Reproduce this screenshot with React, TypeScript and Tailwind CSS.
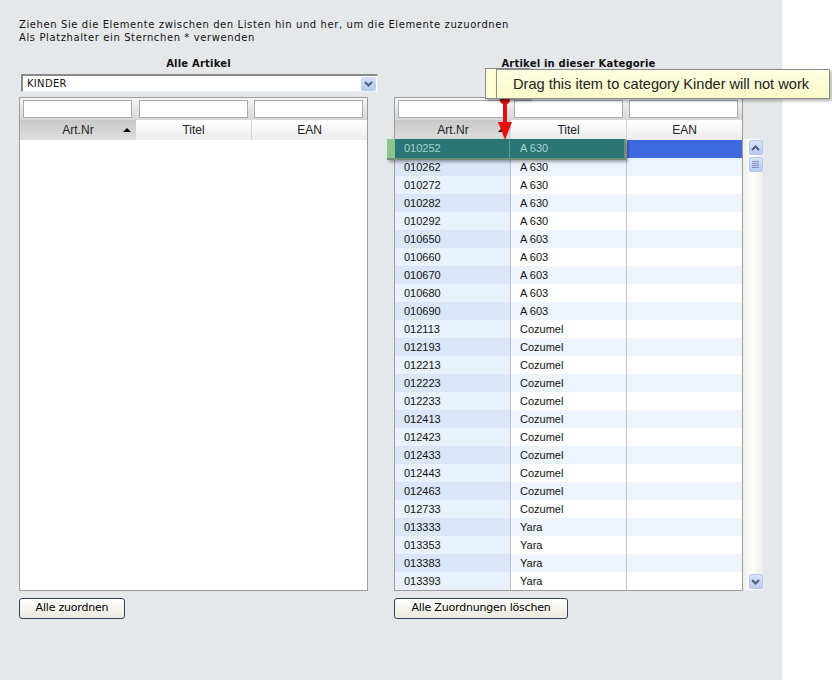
import React from "react";

interface Article {
    nr: string;
    title: string;
}

const articles: Article[] = [
    { nr: "010252", title: "A 630" },
    { nr: "010262", title: "A 630" },
    { nr: "010272", title: "A 630" },
    { nr: "010282", title: "A 630" },
    { nr: "010292", title: "A 630" },
    { nr: "010650", title: "A 603" },
    { nr: "010660", title: "A 603" },
    { nr: "010670", title: "A 603" },
    { nr: "010680", title: "A 603" },
    { nr: "010690", title: "A 603" },
    { nr: "012113", title: "Cozumel" },
    { nr: "012193", title: "Cozumel" },
    { nr: "012213", title: "Cozumel" },
    { nr: "012223", title: "Cozumel" },
    { nr: "012233", title: "Cozumel" },
    { nr: "012413", title: "Cozumel" },
    { nr: "012423", title: "Cozumel" },
    { nr: "012433", title: "Cozumel" },
    { nr: "012443", title: "Cozumel" },
    { nr: "012463", title: "Cozumel" },
    { nr: "012733", title: "Cozumel" },
    { nr: "013333", title: "Yara" },
    { nr: "013353", title: "Yara" },
    { nr: "013383", title: "Yara" },
    { nr: "013393", title: "Yara" },
];

function Chevron({ up = false }: { up?: boolean }) {
    return (
        <svg width="9" height="6" viewBox="0 0 9 6">
            <path
                d={up ? "M1 5 L4.5 1.5 L8 5" : "M1 1 L4.5 4.5 L8 1"}
                fill="none"
                stroke="#4a5f86"
                strokeWidth="2"
            />
        </svg>
    );
}

function FilterRow() {
    return (
        <div className="flex h-[22px] bg-gradient-to-b from-[#f6f6f6] to-[#d6d6d6]">
            {[0, 1, 2].map((i) => (
                <div key={i} className="w-[116px] pl-[3px] pt-[2px]">
                    <div className="w-[109px] h-[18px] bg-white border border-[#a4abb2]" />
                </div>
            ))}
        </div>
    );
}

function HeaderRow() {
    return (
        <div className="flex h-[20px] text-[12px] leading-[21px] text-[#222] font-['Liberation_Sans',Arial,sans-serif]">
            <div className="relative w-[116px] text-center bg-gradient-to-b from-[#c9c9c9] to-[#dedede]">
                Art.Nr
                <div className="absolute left-[103px] top-[8px] w-0 h-0 border-l-[4px] border-r-[4px] border-b-[4px] border-l-transparent border-r-transparent border-b-black" />
            </div>
            <div className="w-[116px] text-center bg-gradient-to-b from-white to-[#ececec] border-r border-[#d4d4d4]">
                Titel
            </div>
            <div className="flex-1 text-center bg-gradient-to-b from-white to-[#ececec]">EAN</div>
        </div>
    );
}

function Button({ label, width }: { label: string; width: string }) {
    return (
        <div
            className={`${width} h-[21px] mt-[7px] flex items-center justify-center rounded-[3px] border border-[#30455f] bg-gradient-to-b from-[#fefefd] to-[#ece9df] text-[11px] text-black font-['DejaVu_Sans',Verdana,sans-serif] tracking-[-0.2px]`}
        >
            {label}
        </div>
    );
}

export default function App() {
    return (
        <div className="flex w-[832px] h-[680px] bg-white">
            <div className="relative w-[782px] h-full bg-[#e5e8eb] font-['DejaVu_Sans',Verdana,sans-serif] text-[10px] text-[#111]">
                <div className="pl-[19px] pt-[19px] leading-[12.5px] tracking-[0.6px]">
                    <div>Ziehen Sie die Elemente zwischen den Listen hin und her, um die Elemente zuzuordnen</div>
                    <div>Als Platzhalter ein Sternchen * verwenden</div>
                </div>

                <div className="flex pl-[19px] mt-[14px]">
                    {/* linke Liste */}
                    <div className="w-[359px] flex flex-col">
                        <div className="h-[12px] leading-[12px] text-center font-bold tracking-[0.2px]">
                            Alle Artikel
                        </div>
                        <div className="ml-[2px] mt-[4px] h-[18px] flex items-center bg-white border-t-2 border-l-2 border-[#8a8a8a] border-b border-r border-b-[#eef0f2] border-r-[#eef0f2]">
                            <span className="pl-[4px] flex-1 tracking-[0.3px]">KINDER</span>
                            <div className="w-[15px] h-[14px] mr-[1px] flex items-center justify-center rounded-[2px] bg-gradient-to-b from-[#d3def8] to-[#b7c9f2]">
                                <Chevron />
                            </div>
                        </div>
                        <div className="mt-[5px] w-[349px] h-[494px] bg-white border border-[#9c9c9c] flex flex-col">
                            <FilterRow />
                            <HeaderRow />
                        </div>
                        <Button label="Alle zuordnen" width="w-[106px]" />
                    </div>

                    <div className="w-[16px]" />

                    {/* rechte Liste */}
                    <div className="w-[369px] flex flex-col">
                        <div className="h-[12px] leading-[12px] text-center font-bold tracking-[0.2px]">
                            Artikel in dieser Kategorie
                        </div>
                        <div className="mt-[4px] h-[18px]" />
                        <div className="mt-[5px] flex">
                            <div className="w-[349px] h-[494px] bg-white border border-[#9c9c9c] flex flex-col overflow-hidden">
                                <FilterRow />
                                <HeaderRow />
                                <div className="font-['Liberation_Sans',Arial,sans-serif] text-[11px] text-[#111]">
                                    {articles.map((a, i) => {
                                        const alt = i % 2 === 1;
                                        return (
                                            <div key={a.nr} className="flex h-[18px] leading-[18px]">
                                                <div
                                                    className={`w-[116px] pl-[9px] border-r border-[#c3c3c3] ${
                                                        alt ? "bg-[#dae6f8]" : "bg-[#e9f1fc]"
                                                    }`}
                                                >
                                                    {a.nr}
                                                </div>
                                                <div
                                                    className={`w-[116px] pl-[9px] border-r border-[#c3c3c3] ${
                                                        alt ? "bg-[#eef4fe]" : "bg-white"
                                                    }`}
                                                >
                                                    {a.title}
                                                </div>
                                                <div
                                                    className={`flex-1 ${
                                                        i === 0
                                                            ? "bg-[#3f6adf]"
                                                            : alt
                                                            ? "bg-[#eef4fe]"
                                                            : "bg-white"
                                                    }`}
                                                />
                                            </div>
                                        );
                                    })}
                                </div>
                            </div>
                            {/* Scrollleiste */}
                            <div className="mt-[42px] w-[20px] h-[451px] bg-gradient-to-r from-[#f1f0ea] via-[#fdfdfa] to-[#eeede6] flex flex-col items-center pt-[1px]">
                                <div className="ml-[5px] w-[14px] h-[15px] flex items-center justify-center rounded-[2px] border border-[#b8c8ee] bg-gradient-to-b from-[#d8e2fa] to-[#b9caf2]">
                                    <Chevron up />
                                </div>
                                <div className="ml-[5px] mt-[2px] w-[14px] h-[15px] flex flex-col items-center justify-center gap-[1px] rounded-[2px] border border-[#b8c8ee] bg-gradient-to-b from-[#d8e2fa] to-[#b9caf2]">
                                    <div className="w-[7px] h-px bg-[#7c90c4]" />
                                    <div className="w-[7px] h-px bg-[#7c90c4]" />
                                    <div className="w-[7px] h-px bg-[#7c90c4]" />
                                    <div className="w-[7px] h-px bg-[#7c90c4]" />
                                </div>
                                <div className="flex-1" />
                                <div className="ml-[5px] mb-[1px] w-[14px] h-[15px] flex items-center justify-center rounded-[2px] border border-[#b8c8ee] bg-gradient-to-b from-[#d8e2fa] to-[#b9caf2]">
                                    <Chevron />
                                </div>
                            </div>
                        </div>
                        <Button label="Alle Zuordnungen löschen" width="w-[174px]" />
                    </div>
                </div>

                {/* gezogenes Element */}
                <div className="absolute left-[387px] top-[139px] w-[239px] h-[21px] flex bg-[#2a7677] border-r-2 border-b-2 border-[#6f8f79] shadow-[2px_2px_3px_rgba(0,0,0,0.35)] font-['Liberation_Sans',Arial,sans-serif] text-[11px] leading-[19px] text-[#a7d3cc]">
                    <div className="w-[8px] bg-[#8cc48e]" />
                    <div className="w-[115px] pl-[9px] border-r border-[#5f9a98]">010252</div>
                    <div className="flex-1 pl-[10px]">A 630</div>
                </div>

                {/* roter Pfeil */}
                <div className="absolute left-[503px] top-[97px] w-[4px] h-[28px] bg-[#e01010]" />
                <div className="absolute left-[500px] top-[96px] w-[10px] h-[8px] rounded-full bg-[#d81010]" />
                <div className="absolute left-[498px] top-[122px] w-0 h-0 border-l-[7px] border-r-[7px] border-t-[18px] border-l-transparent border-r-transparent border-t-[#e81010]" />

                {/* Tooltip */}
                <div className="absolute left-[485px] top-[68px] w-[45px] h-[31px] bg-[#fdfdd6] border border-[#8c8c8c] shadow-[2px_2px_2px_rgba(0,0,0,0.3)]" />
                <div className="absolute left-[496px] top-[69px] w-[334px] h-[30px] pl-[16px] bg-gradient-to-b from-[#ffffe3] to-[#fafac8] border border-[#8c8c8c] shadow-[2px_2px_3px_rgba(0,0,0,0.3)] font-['Liberation_Sans',Arial,sans-serif] text-[14.6px] leading-[28px] text-[#222]">
                    Drag this item to category Kinder will not work
                </div>
            </div>
        </div>
    );
}
